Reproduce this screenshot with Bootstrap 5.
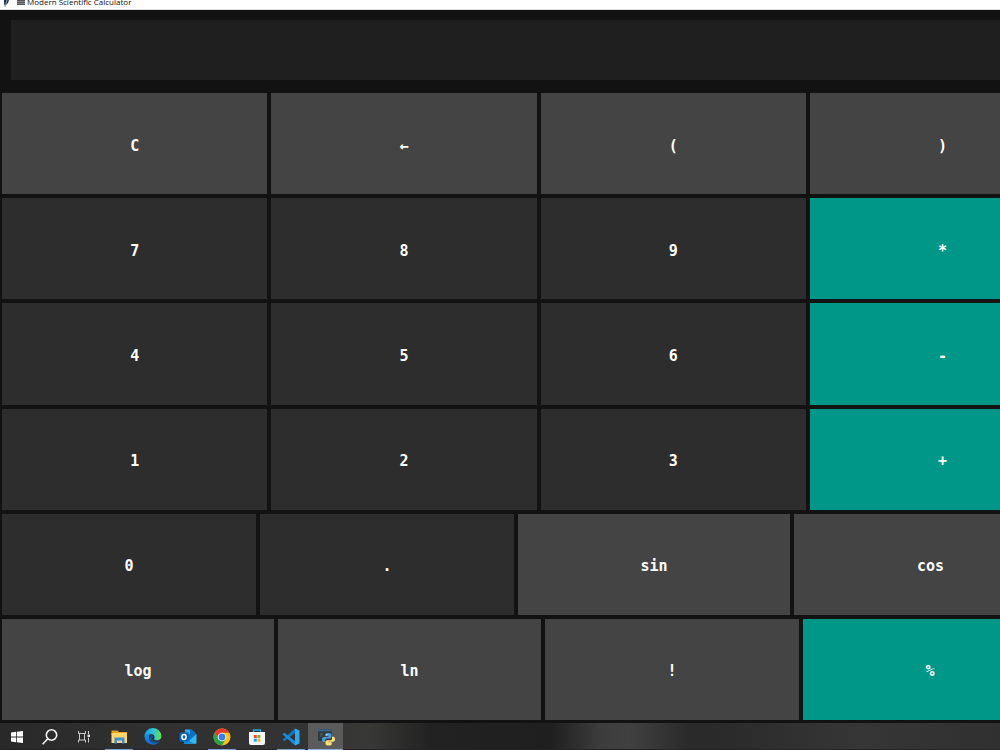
<!DOCTYPE html>
<html lang="en">
<head>
<meta charset="utf-8">
<meta name="viewport" content="width=device-width, initial-scale=1">
<title>Modern Scientific Calculator</title>
<link href="https://cdn.jsdelivr.net/npm/bootstrap@5.3.0/dist/css/bootstrap.min.css" rel="stylesheet">
<style>
body { background: #121212; font-family: "Open Sans", sans-serif; }
.titlebar { height: 10px; background: #fff; color: #111; font-size: 8px; line-height: 14px; border-bottom: 1px solid #ddd; padding-left: 2px; }
.display { height: 60px; background: #1f1f1f; color: #fff; font: 24px "DejaVu Sans Mono", monospace; }
.display-wrap { padding: 10px 0 11px 11px; }
.keyrow { display: grid; flex: 1 1 0; min-height: 0; }
.even { grid-template-columns: repeat(4, 26.93%); }
.trig { grid-template-columns: 25.8% 25.8% 27.6% 27.7%; }
.logs { grid-template-columns: 27.6% 26.7% 25.8% 25.8%; }
.key { margin: 2px; color: #fff; font: bold 15px "DejaVu Sans Mono", monospace; --bs-btn-hover-color: #fff; }
.num { background: #2d2d2d; }
.fn { background: #444; }
.op { background: #009688; }
.taskbar { height: 27px; margin-top: 1px; display: grid; grid-template-columns: 3.3% repeat(9, 3.44%);
  background: linear-gradient(90deg, #292929 0, #303030 15%, #333 30%, #383836 37%, #222 43%, #1f1f1f 55%, #3c3c3c 60%, #404040 63%, #2a2a2a 69%, #2b2b2b 73%, #363636 86%, #303030 100%); border-bottom: 1px solid #2b1f2b; }
.task { background: transparent; margin-bottom: -1px; }
.running { background: linear-gradient(#76a5d8, #76a5d8) center bottom / 28px 1px no-repeat; }
.current { background: linear-gradient(#86b5e8, #86b5e8) center bottom / 100% 1px no-repeat #5b5b5b; }
</style>
</head>
<body class="d-flex flex-column vh-100 overflow-hidden">
<header class="titlebar d-flex align-items-end flex-shrink-0 text-nowrap">
  <svg class="flex-shrink-0 me-1" width="10" height="9" viewBox="0 0 10 9" aria-hidden="true"><path d="M2 0h5L6 3 3 6 2 4z" fill="#27364b"/><path d="M5 0 3 7" stroke="#7d9fc7"/></svg>
  <svg class="flex-shrink-0" width="11" height="9" viewBox="0 0 11 9" aria-hidden="true"><path d="M1 0h8v5H1z" fill="#555"/><path d="M1 1.500h8M1 3.500h8" stroke="#8b8791"/></svg>
  <span>Modern Scientific Calculator</span>
</header>
<main class="d-flex flex-column flex-grow-1 overflow-hidden">
  <div class="display-wrap"><input class="display d-block w-100 border-0 px-3 text-end" type="text" aria-label="Result" readonly></div>
  <div class="d-flex flex-column flex-grow-1">
    <div class="keyrow even">
      <button class="btn rounded-0 border-0 px-0 pt-1 pb-0 key fn">C</button><button class="btn rounded-0 border-0 px-0 pt-1 pb-0 key fn">←</button><button class="btn rounded-0 border-0 px-0 pt-1 pb-0 key fn">(</button><button class="btn rounded-0 border-0 px-0 pt-1 pb-0 key fn">)</button>
    </div>
    <div class="keyrow even">
      <button class="btn rounded-0 border-0 px-0 pt-1 pb-0 key num">7</button><button class="btn rounded-0 border-0 px-0 pt-1 pb-0 key num">8</button><button class="btn rounded-0 border-0 px-0 pt-1 pb-0 key num">9</button><button class="btn rounded-0 border-0 px-0 pt-1 pb-0 key op">*</button>
    </div>
    <div class="keyrow even">
      <button class="btn rounded-0 border-0 px-0 pt-1 pb-0 key num">4</button><button class="btn rounded-0 border-0 px-0 pt-1 pb-0 key num">5</button><button class="btn rounded-0 border-0 px-0 pt-1 pb-0 key num">6</button><button class="btn rounded-0 border-0 px-0 pt-1 pb-0 key op">-</button>
    </div>
    <div class="keyrow even">
      <button class="btn rounded-0 border-0 px-0 pt-1 pb-0 key num">1</button><button class="btn rounded-0 border-0 px-0 pt-1 pb-0 key num">2</button><button class="btn rounded-0 border-0 px-0 pt-1 pb-0 key num">3</button><button class="btn rounded-0 border-0 px-0 pt-1 pb-0 key op">+</button>
    </div>
    <div class="keyrow trig">
      <button class="btn rounded-0 border-0 px-0 pt-1 pb-0 key num">0</button><button class="btn rounded-0 border-0 px-0 pt-1 pb-0 key num">.</button><button class="btn rounded-0 border-0 px-0 pt-1 pb-0 key fn">sin</button><button class="btn rounded-0 border-0 px-0 pt-1 pb-0 key fn">cos</button>
    </div>
    <div class="keyrow logs">
      <button class="btn rounded-0 border-0 px-0 pt-1 pb-0 key fn">log</button><button class="btn rounded-0 border-0 px-0 pt-1 pb-0 key fn">ln</button><button class="btn rounded-0 border-0 px-0 pt-1 pb-0 key fn">!</button><button class="btn rounded-0 border-0 px-0 pt-1 pb-0 key op">%</button>
    </div>
  </div>
</main>
<footer class="taskbar flex-shrink-0">
  <button class="btn rounded-0 border-0 p-0 task d-flex align-items-center justify-content-center" aria-label="Start"><svg width="20" height="20" viewBox="0 0 20 20"><path d="M4 5.500 9 4.800V9.600H4zM9.800 4.700 16 4v5.600H9.800zM4 10.400H9v4.800L4 14.500zM9.800 10.400H16V16l-6.200-.8z" fill="#fff"/></svg></button>
  <button class="btn rounded-0 border-0 p-0 task d-flex align-items-center justify-content-center" aria-label="Search"><svg width="20" height="20" viewBox="0 0 20 20" fill="none" stroke="#f3f3f3" stroke-width="1.600"><circle cx="11.500" cy="8" r="5.200"/><path d="M7.800 11.800 2.600 17.200"/></svg></button>
  <button class="btn rounded-0 border-0 p-0 task d-flex align-items-center justify-content-center" aria-label="Task view"><svg width="20" height="20" viewBox="0 0 20 20" fill="none" stroke="#ccc"><path d="M3.500 4v2.500h7V4M3.500 15.500V13h7v2.500M4.500 6.500V13M9.500 6.500V13M13.500 4v3M13.500 10.500v5"/><path d="M12.500 7.500h2.500v2.500h-2.500z" fill="#ddd" stroke="none"/></svg></button>
  <button class="btn rounded-0 border-0 p-0 task running d-flex align-items-center justify-content-center" aria-label="File Explorer"><svg width="20" height="20" viewBox="0 0 20 20"><path d="M2.500 3.500h6L10 5h8v3H2.500z" fill="#e8a317"/><path d="M2.500 6h15.500v10H2.500z" fill="#ffd667"/><path d="M5.500 10.500h10V16.500h-2.500v-3h-5v3H5.500z" fill="#3b8edb"/></svg></button>
  <button class="btn rounded-0 border-0 p-0 task d-flex align-items-center justify-content-center" aria-label="Edge"><svg width="20" height="20" viewBox="0 0 20 20"><defs><linearGradient id="eg"><stop stop-color="#159ee8"/><stop offset=".55" stop-color="#30c6d7"/><stop offset="1" stop-color="#6bdf4b"/></linearGradient><linearGradient id="eb" x2="0" y2="1"><stop stop-color="#1798df"/><stop offset="1" stop-color="#1269c5"/></linearGradient></defs><path d="M1.500 10A8.500 8.500 0 0 1 18.500 9c0 3-2 4.300-4.500 4.300-2.300 0-3.200-.8-2.700-1.800.5-.9.600-3.800-2.300-4.200C5.500 6.800 2.700 8 1.500 10z" fill="url(#eg)"/><path d="M1.500 10C2 7.500 4.500 6 7.500 6.500 6 8 5.500 10 6.200 12.300c1 3.200 4.500 5 10.500 2A8.500 8.500 0 0 1 1.500 10z" fill="url(#eb)"/><path d="M7.800 8.300c-2 2-1.800 5 .3 6.700 2.300 1.900 6 1.400 8.600-.7-4 1.200-7.200-.1-7.400-2.300-.1-1 .5-1.800.9-2.300-.3-.9-1.200-1.500-2.400-1.400z" fill="#14508f"/></svg></button>
  <button class="btn rounded-0 border-0 p-0 task d-flex align-items-center justify-content-center" aria-label="Outlook"><svg width="20" height="20" viewBox="0 0 20 20"><path d="M7 2.500h7l4 4v9.300a1 1 0 0 1-1 1H6z" fill="#0a72c5"/><path d="M7 2.500h5V7H7z" fill="#37a5e8"/><path d="m18.500 7-11 9.800h10a1 1 0 0 0 1-1z" fill="#34b6ef"/><path d="M6 10.500 16 16.800H6z" fill="#168bd9"/><rect x="1.500" y="5.500" width="9" height="9" rx="1" fill="#0963b2"/><ellipse cx="6" cy="10" rx="2.100" ry="2.400" fill="none" stroke="#fff" stroke-width="1.500"/></svg></button>
  <button class="btn rounded-0 border-0 p-0 task running d-flex align-items-center justify-content-center" aria-label="Chrome"><svg width="20" height="20" viewBox="0 0 20 20"><circle cx="10" cy="10" r="8.500" fill="#fbc116"/><path d="M2.640 5.750A8.500 8.500 0 0 1 17.360 5.750H10L6.300 12.100z" fill="#e33b2e"/><path d="M2.640 5.750A8.500 8.500 0 0 0 10 18.500l3.700-6.400-3.700 2-3.700-2z" fill="#29a34a"/><circle cx="10" cy="10" r="4.300" fill="#fff"/><circle cx="10" cy="10" r="3.400" fill="#397ee9"/></svg></button>
  <button class="btn rounded-0 border-0 p-0 task d-flex align-items-center justify-content-center" aria-label="Store"><svg width="20" height="20" viewBox="0 0 20 20"><path d="M6.500 6V3h7v3" fill="none" stroke="#31a9e3" stroke-width="1.300"/><path d="M2 5h16v11a2 2 0 0 1-2 2H4a2 2 0 0 1-2-2z" fill="#f6f6f6"/><path d="M6.800 8h3v3h-3z" fill="#ef4d2f"/><path d="M10.400 8h3v3h-3z" fill="#7bb82c"/><path d="M6.800 11.600h3v3h-3z" fill="#25a1e5"/><path d="M10.400 11.600h3v3h-3z" fill="#f8b51b"/></svg></button>
  <button class="btn rounded-0 border-0 p-0 task running d-flex align-items-center justify-content-center" aria-label="Visual Studio Code"><svg width="20" height="20" viewBox="0 0 20 20"><path d="m14 1.500 4.500 2v13l-4.500 2z" fill="#33a8ec"/><path d="M14 1.500V6L3.300 14.300 1.500 12.800z" fill="#1476bd"/><path d="M14 18.500V14L3.300 5.700 1.500 7.200z" fill="#1c8cdb"/></svg></button>
  <button class="btn rounded-0 border-0 p-0 task current d-flex align-items-center justify-content-center" aria-label="Python"><svg width="20" height="20" viewBox="0 0 20 20"><path d="M3 2.500h14V14H3z" fill="#30393b"/><path d="M3 2.500h14v1.800H3z" fill="#34688e"/><path d="M5 7h3M5 9h2" stroke="#60706a"/><path d="M13 6c-2.300 0-2.800.8-2.800 1.800v1.500h3.300v.6H9c-1.500 0-2 1.200-2 2.600s.6 2.500 1.700 2.500H10v-1.600c0-1.200 1-2 2-2h3c1 0 1.500-.8 1.500-1.600V7.800C16.500 6.600 15.500 6 13 6z" fill="#4d9bd8"/><path d="M14 18.500c2.300 0 2.800-.8 2.800-1.800v-1.400h-3.300v-.6H18c1.500 0 2-1.100 2-2.500s-.6-2.500-1.700-2.500H17v1.700c0 1.200-1 1.900-2 1.900h-3c-1 0-1.500.8-1.500 1.600v1.800c0 1.200 1 1.800 3.500 1.800z" fill="#ffe071"/><circle cx="11.800" cy="7.700" r=".6" fill="#fff"/></svg></button>
</footer>
<script src="https://cdn.jsdelivr.net/npm/bootstrap@5.3.0/dist/js/bootstrap.bundle.min.js"></script>
</body>
</html>
